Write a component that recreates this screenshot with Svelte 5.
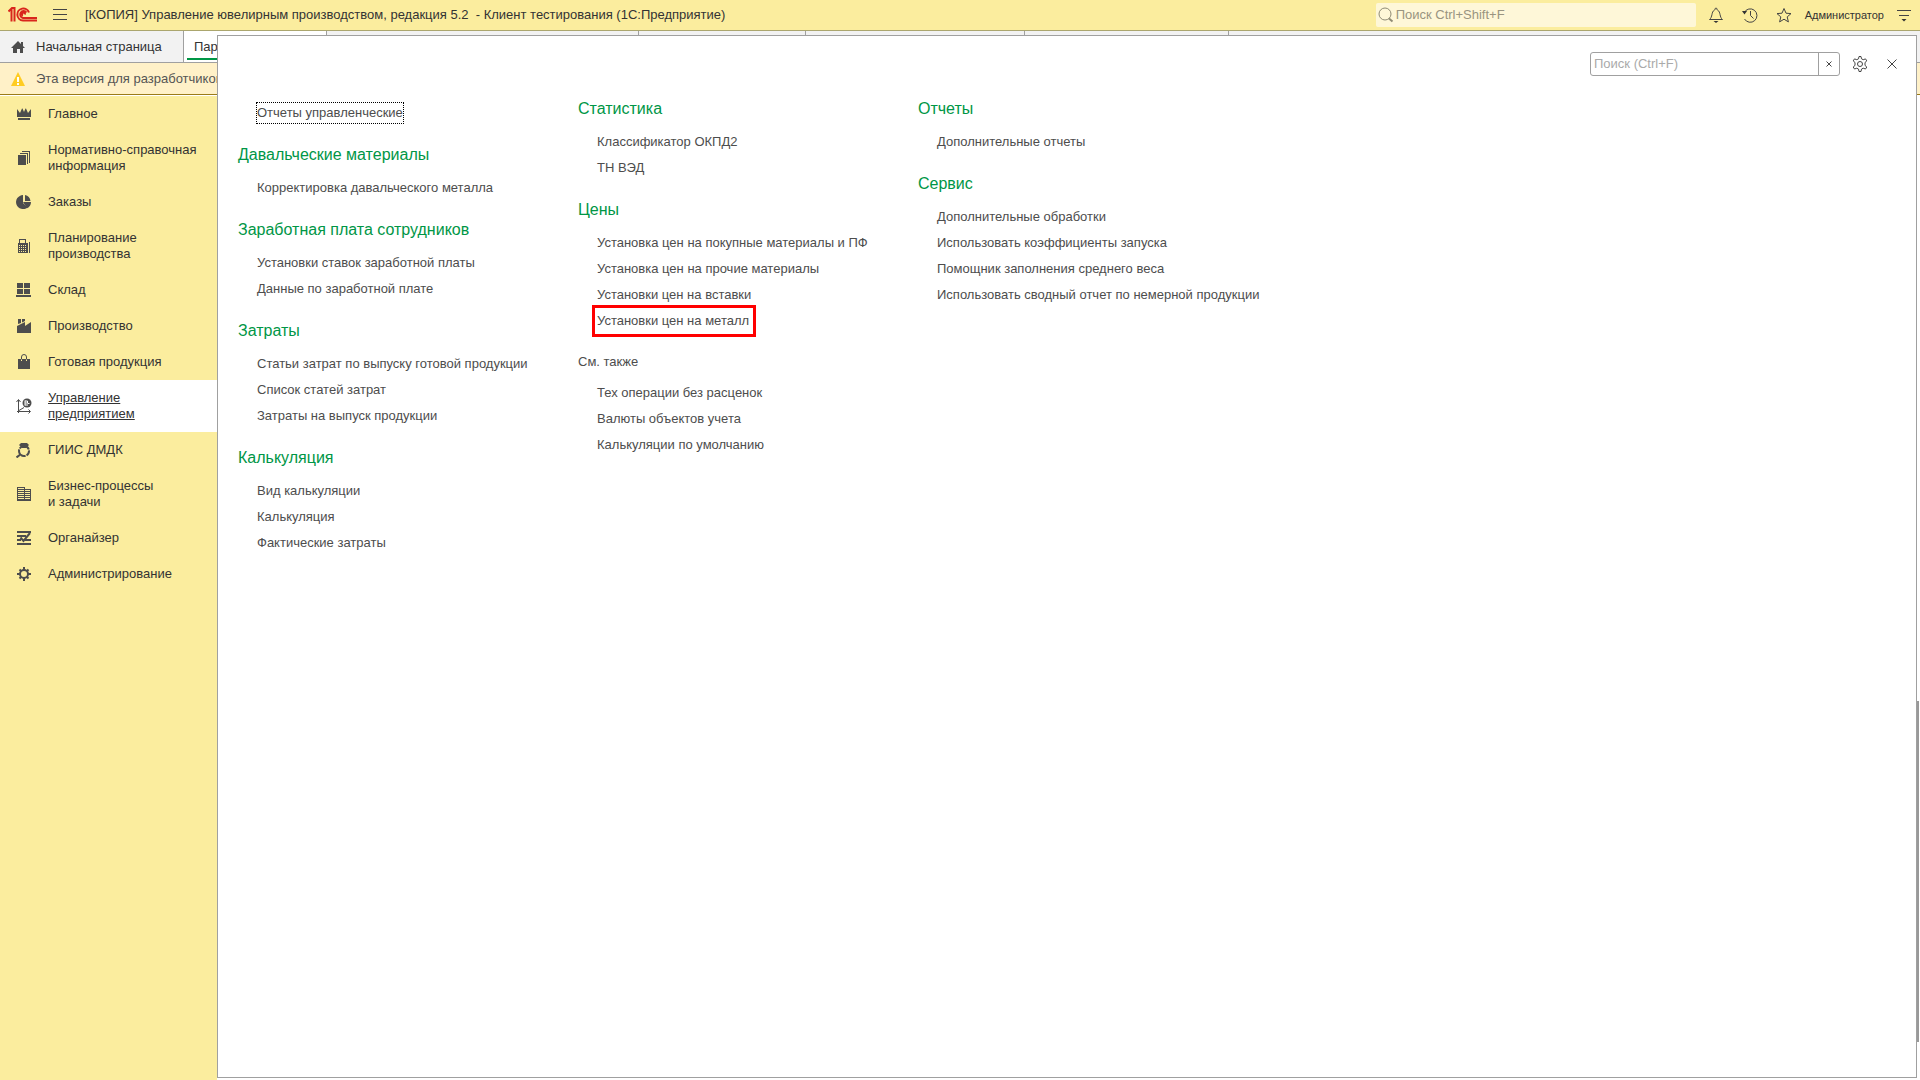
<script>
  const sections = [
    { icon: "crown", lines: ["Главное"] },
    { icon: "copies", lines: ["Нормативно-справочная", "информация"] },
    { icon: "pie", lines: ["Заказы"] },
    { icon: "calculator", lines: ["Планирование", "производства"] },
    { icon: "boxes", lines: ["Склад"] },
    { icon: "factory", lines: ["Производство"] },
    { icon: "bag", lines: ["Готовая продукция"] },
    { icon: "chart", lines: ["Управление", "предприятием"], active: true },
    { icon: "ring", lines: ["ГИИС ДМДК"] },
    { icon: "building", lines: ["Бизнес-процессы", "и задачи"] },
    { icon: "organizer", lines: ["Органайзер"] },
    { icon: "gear", lines: ["Администрирование"] },
  ];

  // widths of the opened tabs whose captions are covered by the menu
  const coveredTabs = [312, 167, 219, 204];

  const columns = [
    [
      { items: ["Отчеты управленческие"] },
      { title: "Давальческие материалы", items: ["Корректировка давальческого металла"] },
      {
        title: "Заработная плата сотрудников",
        items: ["Установки ставок заработной платы", "Данные по заработной плате"],
      },
      {
        title: "Затраты",
        items: [
          "Статьи затрат по выпуску готовой продукции",
          "Список статей затрат",
          "Затраты на выпуск продукции",
        ],
      },
      { title: "Калькуляция", items: ["Вид калькуляции", "Калькуляция", "Фактические затраты"] },
    ],
    [
      { title: "Статистика", items: ["Классификатор ОКПД2", "ТН ВЭД"] },
      {
        title: "Цены",
        items: [
          "Установка цен на покупные материалы и ПФ",
          "Установка цен на прочие материалы",
          "Установки цен на вставки",
          "Установки цен на металл",
        ],
      },
      {
        title: "См. также",
        plain: true,
        items: ["Тех операции без расценок", "Валюты объектов учета", "Калькуляции по умолчанию"],
      },
    ],
    [
      { title: "Отчеты", items: ["Дополнительные отчеты"] },
      {
        title: "Сервис",
        items: [
          "Дополнительные обработки",
          "Использовать коэффициенты запуска",
          "Помощник заполнения среднего веса",
          "Использовать сводный отчет по немерной продукции",
        ],
      },
    ],
  ];

  const focused = "Отчеты управленческие";
  const marked = "Установки цен на металл";

  let globalSearch = $state("");
  let menuSearch = $state("");
</script>

{#snippet sectionIcon(name)}
  <svg class="icon" width="16" height="16" viewBox="0 0 16 16" aria-hidden="true">
    {#if name === "crown"}
      <path d="M1 3l3 4 2-4.500h.5L8 6l1.500-3.500h.5L12 7l3-4v8H1z" />
      <path d="M2 12h12v2H2z" />
    {:else if name === "copies"}
      <path d="M2 5h8v10H2zM4 3h8v11h-1V4H4zM6 1h8v12h-1V2H6z" />
    {:else if name === "pie"}
      <path d="M7 1.100V9l4.500 4.500A7 7 0 1 1 7 1.100z" />
      <path d="M7 8h8a7 7 0 0 1-4 6.300zM9 1.100A7 7 0 0 1 14.500 7H9z" />
    {:else if name === "calculator"}
      <path fill-rule="evenodd" d="M3 1h7v4H9V2H4v3H3zM2 5h10v10H2zM3 7h1v1H3zm2 0h1v1H5zm2 0h1v1H7zm2 0h1v1H9zM3 9h1v1H3zm2 0h1v1H5zm2 0h1v1H7zm2 0h1v1H9zm-6 2h1v1H3zm2 0h1v1H5zm2 0h1v1H7zm2 0h1v1H9zm-6 2h1v1H3zm2 0h1v1H5zm2 0h1v1H7zm2 0h1v1H9z" />
      <path d="M13 4h1v11h-1z" />
    {:else if name === "boxes"}
      <path d="M1 1h6v5H1zM8 1h6v5H8zM1 7h6v5H1zM8 7h6v5H8zM0 13h15v2H0z" />
    {:else if name === "factory"}
      <path d="M2 1h3v4l-3 1zM6 1h3v2L6 4.500zM1 8l8-4v4l6-4v11H1z" />
    {:else if name === "bag"}
      <path d="M2 5h12v10H2z" />
      <path class="cut" d="M5.500 7V5" />
      <path class="cut" d="M10.500 7V5" />
      <path class="line" d="M5.500 5.500V3a2.500 2.500 0 0 1 5 0v2.500" />
    {:else if name === "chart"}
      <path class="line" d="M2.500 15V2M0.500 4l2-2.500 2 2.500M1 13.500h13M12.500 11.500l2 2-2 2M3 12.500l5-3" />
      <circle cx="11" cy="5" r="4.500" />
      <path class="light" d="M9 2.500v5M9 3h2.500v2H9M11.500 5.500h2M9 7h3" />
    {:else if name === "ring"}
      <path d="M5 1h6l2 2-3 3H6L3 3z" />
      <circle class="bold" cx="8" cy="9" r="5" stroke-dasharray="5 1" />
      <path class="bold" d="M5 12l-4.500 3.500" />
    {:else if name === "building"}
      <path d="M1 14h14v1H1zM2 1h6v1H2zM2 3h6v1H2zM2 5h6v1H2zM2 7h6v1H2zM2 9h6v1H2zM2 11h6v1H2zM2 13h6v1H2zM1 1h1v14H1zM8 1h1v14H8zM9 3h5v1H9zM9 5h5v1H9zM9 7h5v1H9zM9 9h5v1H9zM9 11h5v1H9zM9 13h5v1H9zM14 3h1v12h-1z" />
    {:else if name === "organizer"}
      <path d="M1 1h14v2H1zM1 5h9v2H1zM1 9h4v2H1zM9 9h6v2H9zM1 13h14v2H1z" />
      <path class="bold" d="M4.500 7.500l3 3.500L14 3" />
    {:else if name === "gear"}
      <circle class="bold" cx="8" cy="8" r="4" />
      <path class="bold" d="M8 1v3M8 12v3M1 8h3M12 8h3M3.500 3.500L5 5M11 11l1.500 1.500M3.500 12.500L5 11M11 5l1.500-1.500" />
    {/if}
  </svg>
{/snippet}

<div class="app">
  <header class="topbar">
    <svg class="logo" width="30" height="16" viewBox="0 0 30 16" aria-hidden="true">
      <path d="M0.500 4.500L3.500 1.500V14.500M3 4.500M6.500 14.500V1H4" />
      <path d="M21 5.500A6 6 0 1 0 15 13.500h14M18.500 5.500a3.500 3.500 0 1 0-3.500 5.500h14M17 7.500a1.500 1.500 0 1 0-2 1" />
    </svg>
    <button class="tool menu" aria-label="Главное меню">
      <svg width="16" height="16" viewBox="0 0 16 16"><path d="M1 2.500h14M1 7.500h14M1 12.500h14" /></svg>
    </button>
    <h1 class="caption">[КОПИЯ] Управление ювелирным производством, редакция 5.2  - Клиент тестирования (1С:Предприятие)</h1>
    <label class="global-search">
      <svg width="16" height="16" viewBox="0 0 16 16" aria-hidden="true">
        <circle cx="7" cy="7" r="6" />
        <path d="M11 11.500l3.500 3" stroke-width="2" />
      </svg>
      <input type="text" placeholder="Поиск Ctrl+Shift+F" aria-label="Поиск" bind:value={globalSearch} />
    </label>
    <div class="tools">
      <button class="tool" aria-label="Оповещения">
        <svg width="16" height="16" viewBox="0 0 16 16">
          <path d="M1.500 12.500c3-2 2-8 4.500-9 .5-.3 1-.5 1-1.500 0-1.200 2-1.200 2 0 0 1 .5 1.200 1 1.500 2.500 1 1.500 7 4.500 9z" />
          <path class="solid" d="M5.500 14h5L8 16z" />
        </svg>
      </button>
      <button class="tool" aria-label="История">
        <svg width="16" height="16" viewBox="0 0 16 16">
          <path d="M2.300 5.500A6.700 6.700 0 1 1 2.500 12M8.500 4v4.500l3 3" />
          <path class="solid" d="M0 4h5L2.500 7.500z" />
        </svg>
      </button>
      <button class="tool" aria-label="Избранное">
        <svg width="16" height="16" viewBox="0 0 16 16">
          <path d="M8 1.500l2 4.700 5 .4-3.800 3.300 1.200 5L8 12.200l-4.400 2.700 1.200-5L1 6.600l5-.4z" />
        </svg>
      </button>
      <button class="user">Администратор</button>
      <button class="tool" aria-label="Сервис и настройки">
        <svg width="16" height="16" viewBox="0 0 16 16">
          <path d="M1 3.500h14M3 8.500h10" />
          <path class="solid" d="M5.500 12h5L8 14.500z" />
        </svg>
      </button>
    </div>
  </header>

  <nav class="tabs" aria-label="Открытые окна">
    <button class="tab home">
      <svg width="16" height="16" viewBox="0 0 16 16" aria-hidden="true">
        <path d="M8 2L1 9h2v5h4v-4h3v4h3V9h2l-2-2V3h-2v2z" />
      </svg>
      Начальная страница
    </button>
    <button class="tab active">Параметры</button>
    {#each coveredTabs as width}
      <span class="tab" style="width: {width}px"></span>
    {/each}
  </nav>

  <div class="notice">
    <svg width="16" height="16" viewBox="0 0 16 16" aria-hidden="true">
      <path fill="#fc2" d="M8 1l7 14H1z" />
      <path fill="#fff" d="M7 6h2v5H7zM7 12h2v2H7z" />
    </svg>
    Эта версия для разработчиков
  </div>

  <div class="workspace">
    <nav class="sections" aria-label="Разделы">
      {#each sections as section}
        <a class="section" class:active={section.active} href="#{section.icon}">
          {@render sectionIcon(section.icon)}
          <span class="section-name">
            {#each section.lines as line}
              <span>{line}</span>
            {/each}
          </span>
        </a>
      {/each}
    </nav>
    <div class="form">
      <div class="scroll-thumb"></div>
    </div>
  </div>

  <main class="panel">
    <div class="panel-bar">
      <div class="search">
        <input type="text" placeholder="Поиск (Ctrl+F)" aria-label="Поиск в меню" bind:value={menuSearch} />
        <button aria-label="Очистить" onclick={() => (menuSearch = "")}>
          <svg width="6" height="6" viewBox="0 0 6 6"><path d="M.5.5l5 5M5.500.5l-5 5" /></svg>
        </button>
      </div>
      <button class="tool" aria-label="Настройка">
        <svg width="16" height="16" viewBox="0 0 16 16">
          <path d="M6.500 2.800L7 .500h2l.5 2.300 1.700.9 2.300-.8 1.300 2-1.800 1.600v2.900l1.800 1.600-1.300 2-2.300-.8-1.700.9L9 15.500H7l-.5-2.400-1.700-.9-2.300.8-1.300-2L3 9.400V6.500L1.200 4.900l1.300-2 2.300.8z" />
          <circle cx="8" cy="8" r="2.500" />
        </svg>
      </button>
      <button class="tool" aria-label="Закрыть">
        <svg width="16" height="16" viewBox="0 0 16 16"><path d="M3.500 3.500l9 9M12.500 3.500l-9 9" /></svg>
      </button>
    </div>

    <div class="columns">
      {#each columns as groups}
        <div class="column">
          {#each groups as group}
            <section class="group" class:plain={group.plain} class:untitled={!group.title}>
              {#if group.title}
                <h2>{group.title}</h2>
              {/if}
              <ul>
                {#each group.items as item}
                  <li>
                    <a href="#menu" class:focused={item === focused} class:marked={item === marked}>{item}</a>
                  </li>
                {/each}
              </ul>
            </section>
          {/each}
        </div>
      {/each}
    </div>
  </main>
</div>

<style>
  :global(body) {
    margin: 0;
  }

  .app {
    position: relative;
    display: flex;
    flex-direction: column;
    min-height: 100vh;
    overflow: hidden;
    background: #fff;
    color: #333;
    font: 13px/16px "Liberation Sans", Arial, sans-serif;
  }

  button,
  input {
    margin: 0;
    padding: 0;
    border: 0;
    background: none;
    color: inherit;
    font: inherit;
  }

  a {
    color: inherit;
    text-decoration: none;
  }

  svg {
    display: block;
    flex: none;
  }

  .topbar {
    display: flex;
    align-items: center;
    height: 30px;
    padding: 0 8px;
    border-bottom: 1px solid #aba66e;
    background: #fbed9e;
  }

  .logo {
    fill: none;
    stroke: #d9261c;
    stroke-width: 2;
  }

  .tool svg {
    fill: none;
    stroke: #444;
  }

  .tool .solid {
    fill: #333;
    stroke: none;
  }

  .menu {
    margin: 0 17px 0 14px;
  }

  .caption {
    flex: 1;
    margin: 0;
    font-size: 13px;
    font-weight: normal;
    white-space: pre;
  }

  .global-search {
    display: flex;
    align-items: center;
    gap: 2px;
    width: 318px;
    height: 24px;
    padding-left: 2px;
    border-radius: 2px;
    background: #fef7d8;
  }

  .global-search svg {
    fill: none;
    stroke: #8f8b75;
  }

  .global-search input {
    flex: 1;
    outline: none;
  }

  .global-search input::placeholder {
    color: #999480;
    opacity: 1;
  }

  .tools {
    display: flex;
    align-items: center;
    gap: 18px;
    margin-left: 12px;
  }

  .user {
    margin: 0 -6px 0 -5px;
    font-size: 11px;
  }

  .tabs {
    display: flex;
    height: 31px;
    border-bottom: 1px solid #a0a0a0;
    background: #f2f2f2;
  }

  .tab {
    box-sizing: border-box;
    flex: none;
    border-right: 1px solid #a0a0a0;
    text-align: left;
  }

  .home {
    display: flex;
    align-items: center;
    gap: 10px;
    width: 184px;
    padding-left: 10px;
  }

  .home svg {
    fill: #4d4d4d;
  }

  .tab.active {
    width: 143px;
    padding-left: 10px;
    background: linear-gradient(#009646, #009646) 3px 27px / 136px 2px no-repeat #fff;
  }

  .notice {
    display: flex;
    align-items: center;
    gap: 10px;
    height: 31px;
    padding-left: 10px;
    border-bottom: 1px solid #9b7b17;
    background: #fff1c8;
    color: #555;
  }

  .workspace {
    display: flex;
    flex: 1;
    padding-top: 1px;
  }

  .sections {
    width: 217px;
    background: #fbed9e;
  }

  .section {
    display: flex;
    align-items: center;
    gap: 16px;
    padding: 10px 16px;
  }

  .section.active {
    background: #fff;
    text-decoration: underline;
  }

  .section-name {
    display: flex;
    flex-direction: column;
    white-space: nowrap;
  }

  .icon {
    fill: #4d4d4d;
  }

  .icon .line,
  .icon .bold,
  .icon .cut,
  .icon .light {
    fill: none;
    stroke: #4d4d4d;
  }

  .icon .bold {
    stroke-width: 2;
  }

  .icon .cut {
    stroke: #fbed9e;
  }

  .icon .light {
    stroke: #fff;
  }

  .form {
    display: flex;
    flex: 1;
    flex-direction: column;
    align-items: flex-end;
    justify-content: flex-end;
    padding: 0 1px 38px 0;
  }

  .scroll-thumb {
    width: 2px;
    height: 36%;
    background: #999;
  }

  .panel {
    position: absolute;
    inset: 35px 3px 2px 217px;
    border: 1px solid #a0a0a0;
    background: #fff;
    color: #4d4d4d;
  }

  .panel-bar {
    display: flex;
    align-items: center;
    justify-content: flex-end;
    gap: 16px;
    padding: 16px 16px 0 0;
  }

  .search {
    display: flex;
    box-sizing: border-box;
    width: 250px;
    height: 24px;
    margin-right: -4px;
    border: 1px solid #a0a0a0;
    border-radius: 3px;
  }

  .search input {
    flex: 1;
    min-width: 0;
    padding-left: 3px;
    outline: none;
  }

  .search input::placeholder {
    color: #aaa;
    opacity: 1;
  }

  .search button {
    display: flex;
    align-items: center;
    justify-content: center;
    width: 21px;
    border-left: 1px solid #a0a0a0;
  }

  .search button svg {
    fill: none;
    stroke: #444;
  }

  .columns {
    display: flex;
    padding: 23px 20px;
  }

  .column {
    width: 340px;
  }

  .group {
    margin-bottom: 19px;
  }

  .untitled {
    padding-top: 1px;
  }

  h2 {
    margin: 0 0 10px;
    color: #009646;
    font-size: 16px;
    font-weight: normal;
    line-height: 20px;
  }

  .plain h2 {
    margin-bottom: 9px;
    color: inherit;
    font-size: 13px;
    line-height: 18px;
  }

  ul {
    margin: 0;
    padding: 0 0 0 18px;
    list-style: none;
  }

  li {
    display: flex;
    align-items: center;
    height: 26px;
    white-space: nowrap;
  }

  li a {
    padding: 3px 1px;
  }

  .focused {
    outline: 1px dotted #000;
    outline-offset: -1px;
  }

  .marked {
    margin-left: -1px;
    padding: 5px 4px 5px 2px;
    outline: 3px solid #f00;
  }
</style>
